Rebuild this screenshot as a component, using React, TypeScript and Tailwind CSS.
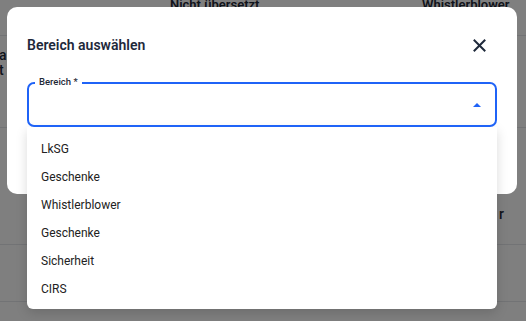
import React from "react";

const font = { fontFamily: "Roboto, 'Noto Sans', sans-serif" };

export default function App() {
  const items = ["LkSG", "Geschenke", "Whistlerblower", "Geschenke", "Sicherheit", "CIRS"];
  return (
    <div className="relative w-[526px] h-[321px] overflow-hidden bg-white text-[#1f2937]" style={font}>
      {/* background page */}
      <div className="flex flex-col w-full">
        <div className="h-[36px] border-b border-[#e5e7eb] flex items-start">
          <div className="w-[170px]" />
          <div className="-mt-[5px] text-[13px] font-semibold w-[252px]">Nicht übersetzt</div>
          <div className="-mt-[5px] text-[13px] font-semibold">Whistlerblower</div>
        </div>
        <div className="h-[92px] border-b border-[#e5e7eb] flex flex-col pt-[12px] text-[14px] font-medium leading-[15px] -ml-[1px]">
          <span>a</span>
          <span>t</span>
        </div>
        <div className="h-[117px] border-b border-[#e5e7eb] flex justify-end items-start pt-[76px] pr-[22px] text-[14px] font-medium">
          <span>r</span>
        </div>
        <div className="h-[57px] border-b border-[#e5e7eb]" />
        <div className="h-[40px]" />
      </div>

      {/* overlay */}
      <div className="absolute inset-0 bg-black/50" />

      {/* dialog */}
      <div className="absolute left-[7px] top-[7px] w-[510px] h-[187px] bg-white rounded-[10px] px-[20px] pt-[28px]">
        <div className="flex items-center justify-between">
          <h2 className="text-[14px] font-semibold text-[#1e293b] leading-[20px]">Bereich auswählen</h2>
          <svg width="13" height="13" viewBox="0 0 13 13" className="mr-[11px]">
            <path d="M1.5 1.5 L11.5 11.5 M11.5 1.5 L1.5 11.5" stroke="#1e293b" strokeWidth="2" strokeLinecap="square" />
          </svg>
        </div>
      </div>

      {/* select field */}
      <div className="absolute left-[27px] top-[82px] w-[470px]">
        <div className="relative h-[45px] rounded-[7px] border-2 border-[#1f63f7] flex items-center justify-end pr-[14px]">
          <span className="absolute -top-[8px] left-[6px] bg-white px-[4px] text-[9.5px] font-medium leading-[12px] text-[#1f2937]">
            Bereich *
          </span>
          <svg width="8" height="4" viewBox="0 0 8 4">
            <path d="M0 4 L4 0 L8 4 Z" fill="#1f63f7" />
          </svg>
        </div>
        <div className="bg-white rounded-b-[6px] shadow-[0_4px_12px_rgba(0,0,0,0.15)] pt-[8px] pb-[6px]">
          {items.map((it, i) => (
            <div key={i} className="h-[28px] flex items-center px-[14px] text-[12px] text-[#222]">
              {it}
            </div>
          ))}
        </div>
      </div>
    </div>
  );
}
